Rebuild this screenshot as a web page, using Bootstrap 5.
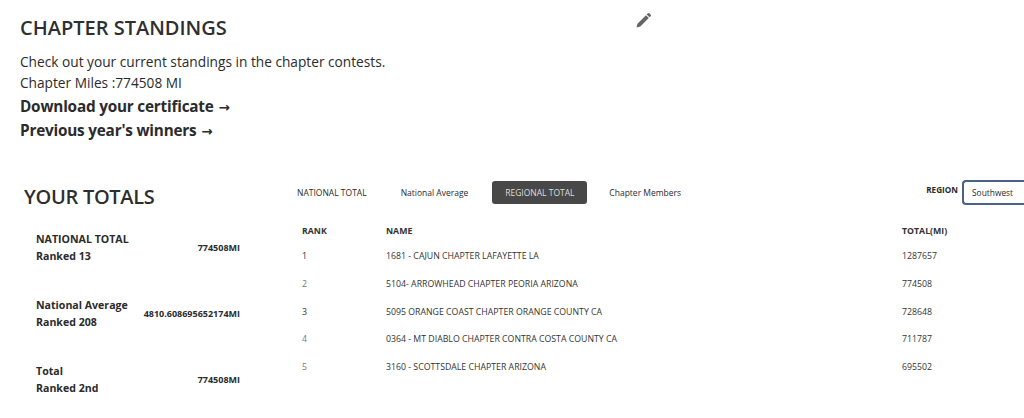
<!DOCTYPE html>
<html lang="en">
<head>
<meta charset="utf-8">
<title>Chapter Standings</title>
<link rel="stylesheet" href="https://cdn.jsdelivr.net/npm/bootstrap@5.3.0/dist/css/bootstrap.min.css">
<style>
html,body{height:418px;overflow:hidden}
body{font-family:"Open Sans","Noto Sans",sans-serif;color:#2b2b2b;background:#fff}
.intro{padding:14px 0 0 20px;height:176px}
.intro-top{width:632px}
.page-title{font-size:20px;line-height:28px;font-weight:600;margin:0;color:#2f2f2f}
.pencil{width:17px;height:17px;margin-top:-2px}
.intro-text{font-size:13.7px;line-height:21px;margin-top:9px;margin-bottom:1px}
.strong-link{display:block;font-size:15.3px;line-height:24px;height:24px;font-weight:700;color:#2b2b2b;text-decoration:none;letter-spacing:-.2px}
.link-arrow{font-family:"DejaVu Sans",sans-serif;font-size:13.5px;line-height:1;letter-spacing:0;margin-left:1px}
.totals-col{width:284px;flex:none;padding:0 44px 0 24px}
.totals-title{font-size:20px;line-height:28px;font-weight:600;margin:7px 0 0;color:#2f2f2f;letter-spacing:-.3px}
.total-row{margin-left:12px;height:34px;margin-bottom:32px;font-weight:700;font-size:10.6px;line-height:17px}
.total-first{margin-top:20px}
.total-val{font-size:9px;padding-bottom:2px}
.main-col{min-width:0;flex:1;margin-right:-20px}
.tab-row{height:25px;margin-top:4px}
.tab-item{font-size:8.5px;line-height:23px;height:23px;padding:0 12px;border-radius:3px;color:#2b2b2b;text-decoration:none;white-space:nowrap}
.tab-first{margin-left:1px;margin-right:10px}
.tab-on{background:#484848;color:#ddd;margin:0 22px 0 12px;width:95px;text-align:center;padding:0}
.region-box{margin-left:auto;flex:none}
.region-label{font-size:8.2px;font-weight:700;margin-right:4px;padding-bottom:4px}
.region-select{height:25px;width:82px;border:2px solid #4a6286;border-right:0;border-radius:4px 0 0 4px;padding:0 8px;font-size:8.4px;line-height:21px;background:#fff}
.standing-table{margin:15px 0 0 16px;--bs-table-bg:transparent;font-size:8.75px;table-layout:fixed;width:720px}
.standing-table th,.standing-table td{border:0;padding:0 0 0 2px;height:27.7px;vertical-align:middle;color:#333}
.standing-table th{font-weight:700;height:23px}
.standing-table td.rank-faded{color:#777}
.col-rank{width:84px}
.col-total{width:120px}
</style>
</head>
<body>
<div class="intro">
  <div class="intro-top d-flex justify-content-between align-items-start">
    <h1 class="page-title">CHAPTER STANDINGS</h1>
    <svg class="pencil" viewBox="0 0 16 16" fill="#666" aria-hidden="true"><path d="M12.1 1.2a1 1 0 0 1 1.4 0l1.3 1.3a1 1 0 0 1 0 1.4l-1.1 1.1-2.7-2.7zM10.3 3l2.7 2.7-8 8-3.6.9.9-3.6z"/></svg>
  </div>
  <div class="intro-text">Check out your current standings in the chapter contests.<br>Chapter Miles :774508 MI</div>
  <a class="strong-link" href="#">Download your certificate <span class="link-arrow">→</span></a>
  <a class="strong-link" href="#">Previous year's winners <span class="link-arrow">→</span></a>
</div>
<div class="d-flex">
  <div class="totals-col">
    <h2 class="totals-title">YOUR TOTALS</h2>
    <div class="total-row total-first d-flex justify-content-between align-items-center"><div>NATIONAL TOTAL<br>Ranked 13</div><div class="total-val">774508MI</div></div>
    <div class="total-row d-flex justify-content-between align-items-center"><div>National Average<br>Ranked 208</div><div class="total-val">4810.608695652174MI</div></div>
    <div class="total-row d-flex justify-content-between align-items-center"><div>Total<br>Ranked 2nd</div><div class="total-val">774508MI</div></div>
  </div>
  <div class="main-col">
    <div class="tab-row d-flex align-items-center">
      <a class="tab-item tab-first" href="#">NATIONAL TOTAL</a>
      <a class="tab-item" href="#">National Average</a>
      <a class="tab-item tab-on" href="#">REGIONAL TOTAL</a>
      <a class="tab-item px-0" href="#">Chapter Members</a>
      <div class="region-box d-flex align-items-center"><span class="region-label">REGION</span><div class="region-select">Southwest</div></div>
    </div>
    <table class="table standing-table">
      <thead><tr><th class="col-rank">RANK</th><th>NAME</th><th class="col-total">TOTAL(MI)</th></tr></thead>
      <tbody>
        <tr><td>1</td><td>1681 - CAJUN CHAPTER LAFAYETTE LA</td><td>1287657</td></tr>
        <tr><td class="rank-faded">2</td><td>5104- ARROWHEAD CHAPTER PEORIA ARIZONA</td><td>774508</td></tr>
        <tr><td>3</td><td>5095 ORANGE COAST CHAPTER ORANGE COUNTY CA</td><td>728648</td></tr>
        <tr><td class="rank-faded">4</td><td>0364 - MT DIABLO CHAPTER CONTRA COSTA COUNTY CA</td><td>711787</td></tr>
        <tr><td class="rank-faded">5</td><td>3160 - SCOTTSDALE CHAPTER ARIZONA</td><td>695502</td></tr>
      </tbody>
    </table>
  </div>
</div>
<script src="https://cdn.jsdelivr.net/npm/bootstrap@5.3.0/dist/js/bootstrap.bundle.min.js"></script>
</body>
</html>
